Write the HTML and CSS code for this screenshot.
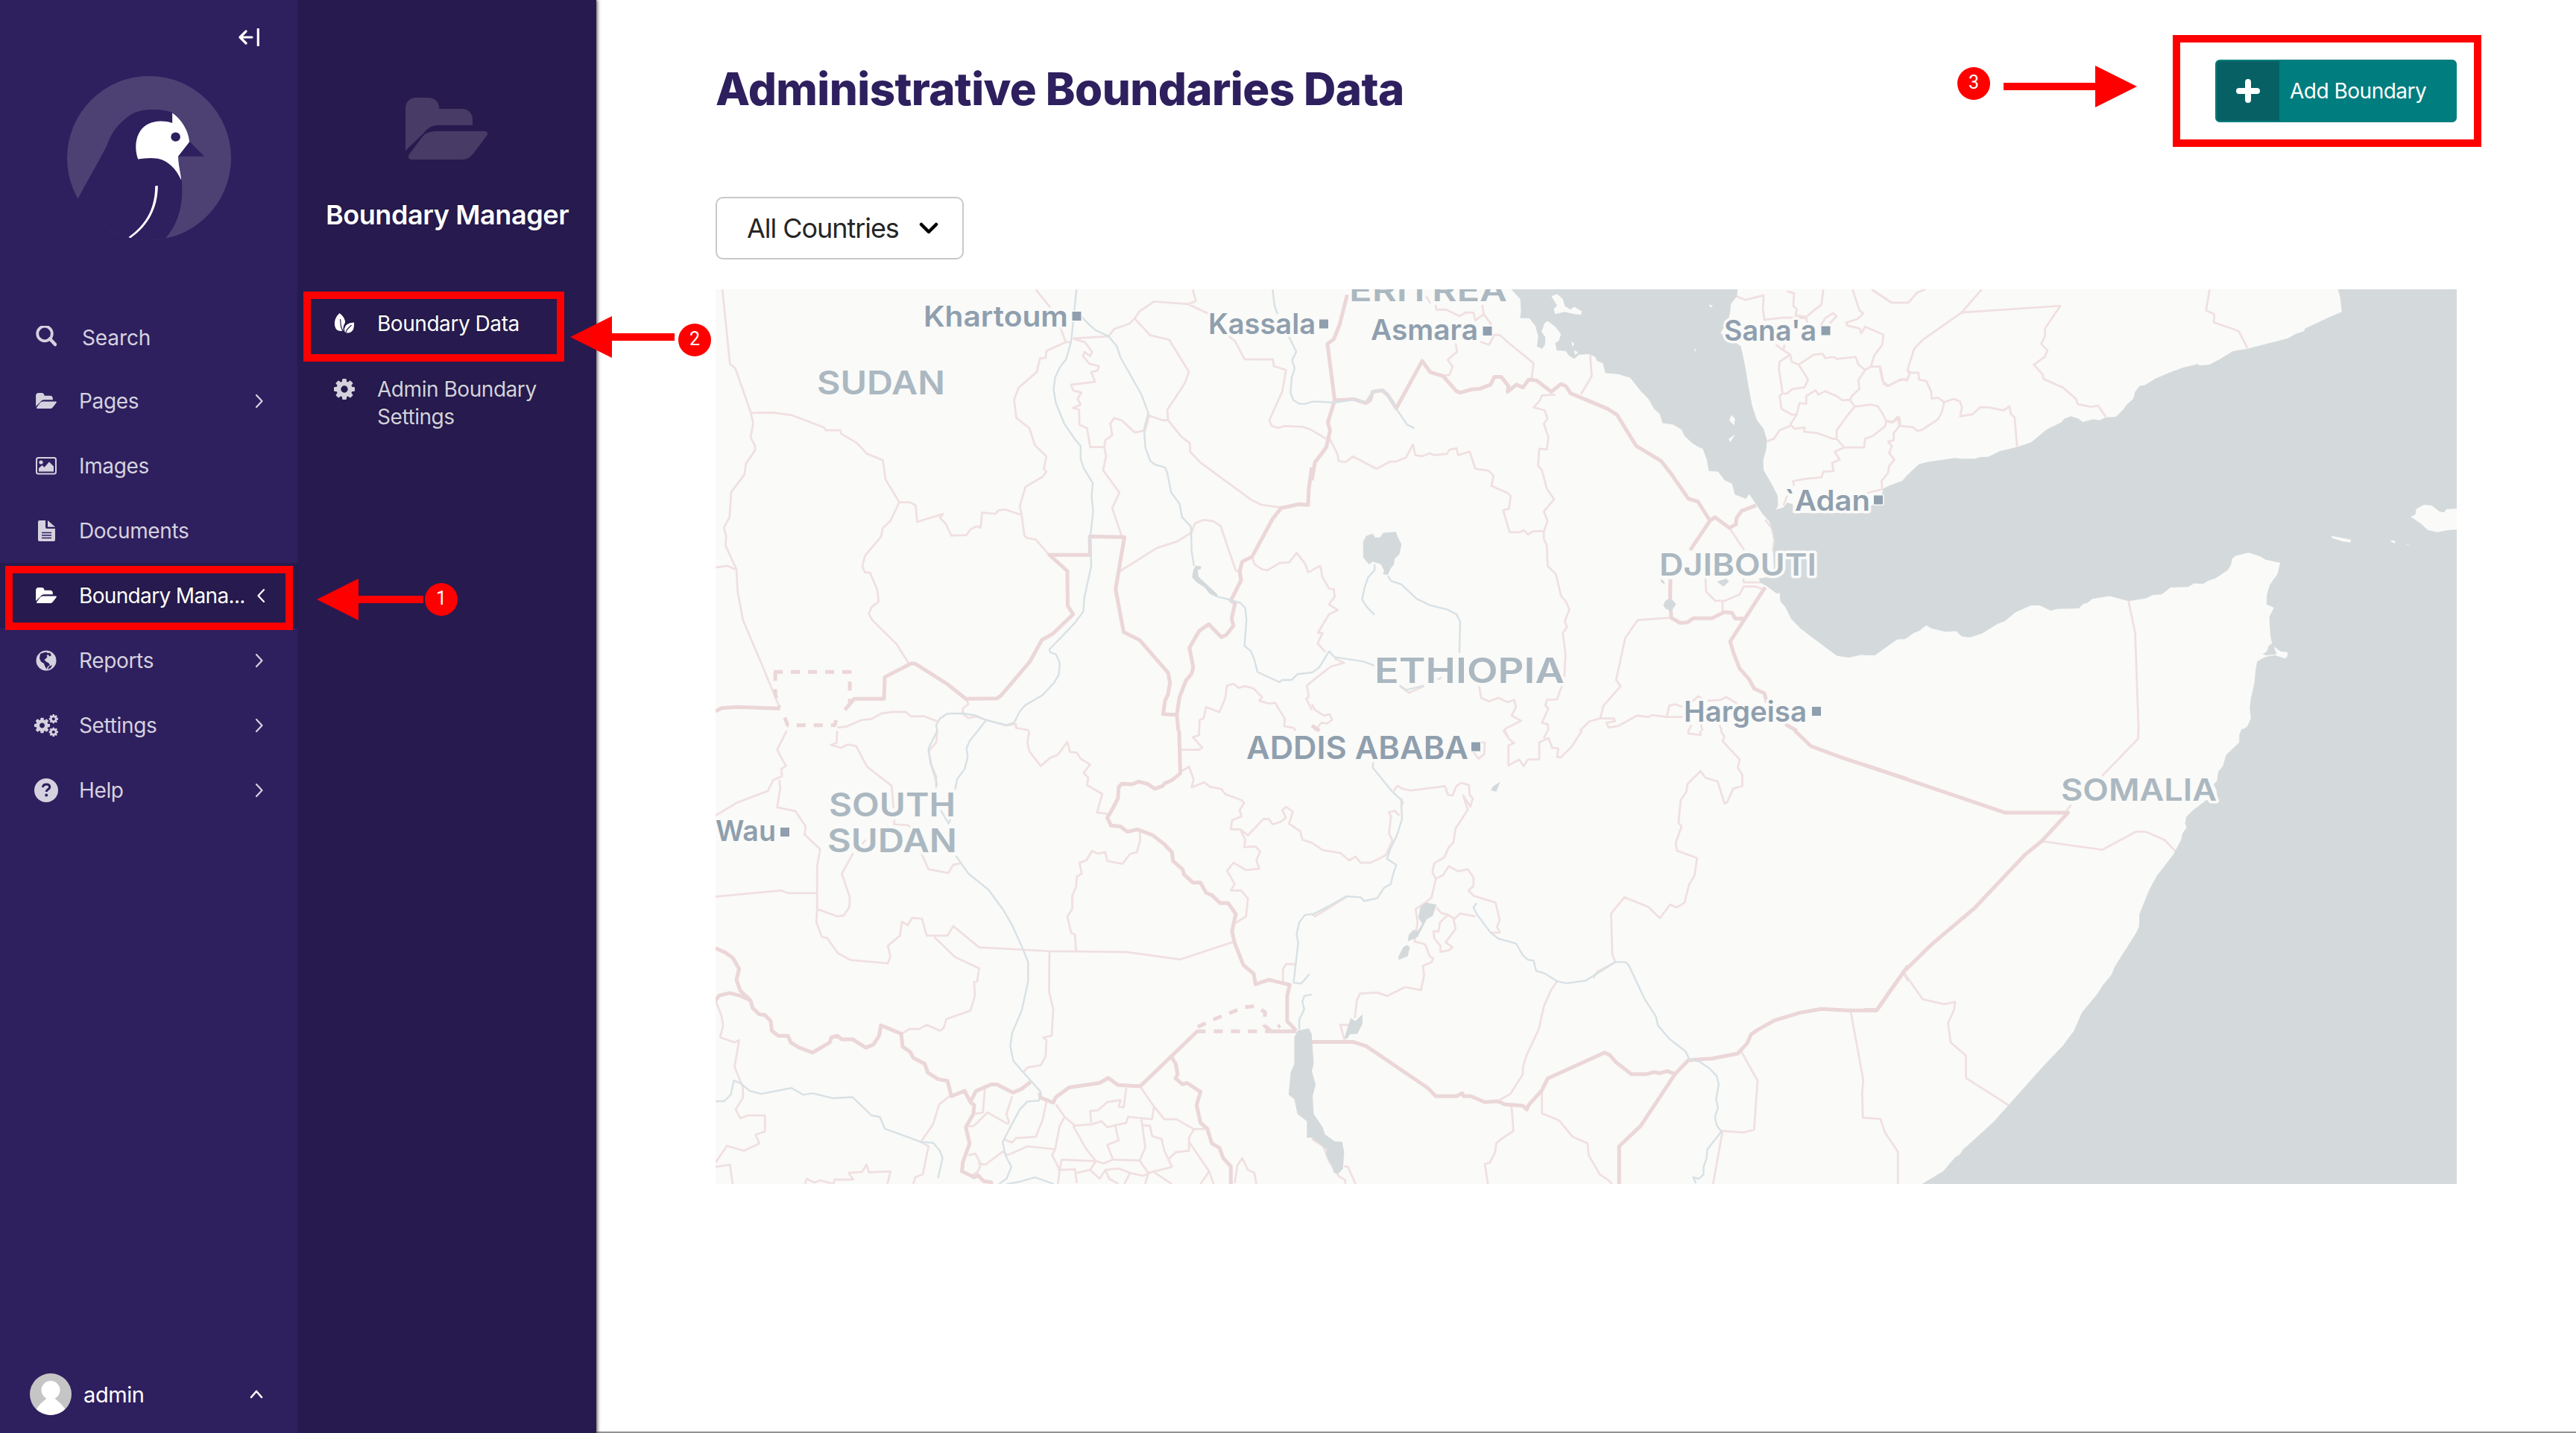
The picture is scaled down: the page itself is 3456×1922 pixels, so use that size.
FILE: index.html
```html
<!DOCTYPE html>
<html lang="en">
<head>
<meta charset="utf-8">
<title>Administrative Boundaries Data</title>
<link rel="stylesheet" href="styles.css">
</head>
<body>
<svg class="defs" aria-hidden="true">
  <symbol id="folder" viewBox="0 0 110 83"><path d="M0 71V14C0 6 6 0 14 0h17c8 0 14 6 14 13v2h31c8 0 14 6 14 14v8H43c-7 0-14 4-18 10zM41 45h65c4 0 5 3 3 6L91 75c-4 5-9 8-15 8H8c-4 0-5-4-3-7l18-24c4-5 11-7 18-7z"/></symbol>
  <symbol id="gear" viewBox="0 128 1536 1536"><path d="M1024 896q0-106-75-181t-181-75-181 75-75 181 75 181 181 75 181-75 75-181zm512-109v222q0 12-8 23t-20 13l-185 28q-19 54-39 91 35 50 107 138 10 12 10 25t-9 23q-27 37-99 108t-94 71q-12 0-26-9l-138-108q-44 23-91 38-16 136-29 186-7 28-36 28h-222q-14 0-24.500-8.500t-11.500-21.500l-28-184q-49-16-90-37l-141 107q-10 9-25 9-14 0-25-11-126-114-165-168-7-10-7-23 0-12 8-23 15-21 51-66.500t54-70.500q-27-50-41-99l-183-27q-13-2-21-12.500t-8-23.500v-222q0-12 8-23t19-13l186-28q14-46 39-92-40-57-107-138-10-12-10-24 0-10 9-23 26-36 98.500-107.500t94.500-71.500q13 0 26 10l138 107q44-23 91-38 16-136 29-186 7-28 36-28h222q14 0 24.500 8.500t11.500 21.500l28 184q49 16 90 37l142-107q9-9 24-9 13 0 25 10 129 119 165 170 7 8 7 22 0 12-8 23-15 21-51 66.500t-54 70.500q26 50 41 98l183 28q13 2 21 12.500t8 23.500z"/></symbol>
  <symbol id="chevron" viewBox="0 0 12 20"><path d="M2 2l7.500 8L2 18" fill="none" stroke="currentColor" stroke-width="2.200" stroke-linecap="round" stroke-linejoin="round"/></symbol>
</svg>
<div class="layout">
  <aside class="sidebar">
    <div class="sidebar-top">
      <svg class="collapse" viewBox="0 0 28 24"><path d="M18 12H2M10 4L2 12l8 8" fill="none" stroke="#fff" stroke-width="3.200" stroke-linecap="round" stroke-linejoin="round"/><path d="M26.300 1v22" stroke="#fff" stroke-width="3.200" stroke-linecap="round"/></svg>
    </div>
    <svg class="logo" viewBox="90 102 220 220">
      <defs><clipPath id="disc"><circle cx="200" cy="212" r="110"/></clipPath></defs>
      <circle cx="200" cy="212" r="110" fill="#4d4174"/>
      <g clip-path="url(#disc)"><g transform="scale(.523 .4082)">
        <path fill="#2e1f5e" d="M198 658C225 590 250 540 275 475C285 440 298 415 320 392C345 362 370 359 400 360C425 361 440 368 445 372C465 390 482 425 486 465L524 514H457L466 590C470 650 466 720 425 783L420 810H200Z"/>
        <path fill="#fff" d="M442 371C465 390 484 430 486 466L457 514C458 545 464 570 465 592C450 550 430 528 405 521C385 517 370 520 354 523C345 490 347 455 360 430C375 402 405 390 442 404Z"/>
        <ellipse cx="450.500" cy="450" rx="12" ry="15" fill="#2e1f5e"/>
        <path fill="#fff" d="M398 611L405 610C405 670 388 735 335 782L329 780C378 735 398 680 398 611Z"/>
      </g></g>
    </svg>
    <nav class="menu">
      <a class="item search"><svg class="icon" viewBox="0 0 28 28"><circle cx="12" cy="10.500" r="9.800" fill="none" stroke="currentColor" stroke-width="3.800"/><path d="M19 17.500l7 7.500" stroke="currentColor" stroke-width="4.600" stroke-linecap="round"/></svg><span>Search</span></a>
      <a class="item"><svg class="icon folder"><use href="#folder"/></svg><span>Pages</span><svg class="chev"><use href="#chevron"/></svg></a>
      <a class="item"><svg class="icon" viewBox="0 0 28 24"><rect x="1" y="1" width="26" height="21.500" rx="2.500" fill="none" stroke="currentColor" stroke-width="2"/><circle cx="7" cy="7" r="2.600" fill="currentColor"/><path fill="currentColor" d="M4 19.500v-4.500l4.500-4 3 2.800L18 6.500l6 6v7z"/></svg><span>Images</span></a>
      <a class="item"><svg class="icon" viewBox="0 0 28 28"><path fill="currentColor" d="M5 0H13V9q0 2 2 2H26V26q0 2-2 2H5q-2 0-2-2V2q0-2 2-2zM16 0L26 8.800H16z"/><path d="M8 16.500h13M8 20h13M8 23.500h13" stroke="#2e1f5e" stroke-width="1.700"/></svg><span>Documents</span></a>
      <a class="item active"><svg class="icon folder"><use href="#folder"/></svg><span>Boundary Mana...</span><svg class="chev back"><use href="#chevron"/></svg></a>
      <a class="item"><svg class="icon" viewBox="0 0 28 28"><circle cx="14" cy="14" r="13.500" fill="currentColor"/><path fill="#2e1f5e" d="M6 5Q10 3 14 2.500L16 4 19 3.500 21 7 18 8.500 17 6 14.500 7 15.500 9.500 11.500 13 14 15.500 17.500 17.500 19 20 16 22 14.500 25.500 12 21 11 18 7 15.500 5 11zM18 21.500L22 20 20 24 16 26z"/></svg><span>Reports</span><svg class="chev"><use href="#chevron"/></svg></a>
      <a class="item"><svg class="icon gears" viewBox="0 0 32 30"><use href="#gear" x="0" y="4.500" width="21" height="21"/><use href="#gear" x="19.500" y="0" width="12.500" height="12.500"/><use href="#gear" x="19.500" y="17.500" width="12.500" height="12.500"/></svg><span>Settings</span><svg class="chev"><use href="#chevron"/></svg></a>
      <a class="item"><svg class="icon help" viewBox="0 0 32 32"><circle cx="16" cy="16" r="16" fill="currentColor"/><path d="M11.500 12q.3-4 4.700-4t4.500 3.600q0 2-2.400 3.200-2 1.200-2.100 3.200" fill="none" stroke="#2e1f5e" stroke-width="3"/><circle cx="16.200" cy="22.500" r="2" fill="#2e1f5e"/></svg><span>Help</span><svg class="chev"><use href="#chevron"/></svg></a>
    </nav>
    <div class="account">
      <svg class="avatar" viewBox="0 0 56 56"><clipPath id="av"><circle cx="28" cy="28" r="28"/></clipPath><g clip-path="url(#av)"><rect width="56" height="56" fill="#c5c5c5"/><ellipse cx="28" cy="22.500" rx="12.500" ry="12.500" fill="#fff"/><path fill="#fff" d="M23 32h10q1 3 5 5.500Q45 43 48 50V56H8V50Q11 43 18 37.500 22 35 23 32z"/></g></svg>
      <span class="account-name">admin</span>
      <svg class="chev-up" viewBox="0 0 18 12"><path d="M2 10l7-8 7 8" fill="none" stroke="#fff" stroke-width="2.600" stroke-linecap="round" stroke-linejoin="round"/></svg>
    </div>
  </aside>
  <aside class="submenu">
    <svg class="submenu-icon"><use href="#folder"/></svg>
    <h2>Boundary Manager</h2>
    <a class="subitem active"><svg class="subicon" viewBox="0 0 27 27"><path fill="currentColor" d="M7 0Q15 6 14.500 13Q11.500 17 12 23.500Q2 26 .5 16Q-.5 7 7 0zM26.500 12.500Q27.500 26 18 26.500Q13 27 13.500 21Q14.500 13 26.500 12.500z"/><path d="M8 8l1 10 3 8M23 16l-6 6-2 5" fill="none" stroke="#261a4e" stroke-width="1.200"/></svg><span>Boundary Data</span></a>
    <a class="subitem"><svg class="subicon gear"><use href="#gear"/></svg><span>Admin Boundary<br>Settings</span></a>
  </aside>
  <main class="main">
    <header class="header">
      <h1>Administrative Boundaries Data</h1>
      <button class="add"><span class="add-icon"><svg viewBox="0 0 32 32"><path d="M16 4v24M4 16h24" stroke="#fff" stroke-width="8" stroke-linecap="round"/></svg></span><span class="add-label">Add Boundary</span></button>
    </header>
    <div class="select"><span>All Countries</span><svg viewBox="0 0 26 16"><path d="M3 3l10 10L23 3" fill="none" stroke="#000" stroke-width="4.500" stroke-linecap="round" stroke-linejoin="round"/></svg></div>
    <svg class="map" viewBox="960 388 2336 1200">
      <rect x="960" y="388" width="2336" height="1200" fill="#fafaf8"/>
      <!-- north-west tile -->
      <g transform="translate(960 380) scale(.5102 .3827)">
        <path class="water" d="M1262 990L1278 992 1275 1003 1268 1005 1270 1028 1320 1090 1318 1100 1300 1088 1285 1065 1265 1048 1253 1030 1256 1005z"/>
        <path class="thin" d="M18 22L38 283 52 298 92 450 99 490 92 540 104 570 104 585 80 632 76 670 41 732 37 818 22 857 28 888 26 918 55 1003 58 1080 72 1180 115 1315 168 1485M0 996L32 990 52 1003M92 454L152 453 200 462 285 505 290 515 328 515 330 527 372 560 398 597 440 620 447 687 483 767 510 767 526 778 530 836 598 808 590 822 605 842 620 884 660 882 670 863 685 852 697 856 701 803 735 808 745 795 762 793 805 812 812 885 820 893 842 898 876 950M483 767L460 832 440 857 435 888 393 955 386 992 393 1013 406 1014 425 1072 429 1115 410 1135 403 1158 412 1180 475 1263 508 1332M842 22L880 84M905 150L921 206 870 237 868 262 853 263 845 310 797 366 785 408 791 472 825 507 840 568 870 606 863 650 870 660 860 678 815 713 800 780 805 812M921 206H935M940 193L1033 186 1048 160 1088 142 1102 123 1115 98 1153 64 1243 73 1263 62 1255 22M1243 73L1295 106M940 193L972 207 990 240 985 255 970 240 966 255 983 282 1008 290 1005 305 988 312 998 345 958 352 935 355 940 375 962 383 952 405 960 425 940 437 956 443 957 495 977 508 985 574 1022 574 1027 605 1019 655 1062 733 1043 788 1068 885"/>
        <path class="thin" d="M1102 123L1143 182 1193 198 1245 311 1233 352 1188 443 1190 480 1225 538 1247 560 1248 590 1275 628 1408 758 1435 776 1488 786M1022 574L1025 550 1043 532 1038 492 1048 472 1068 480 1103 523 1130 515 1140 463 1175 480 1190 480M1350 185L1366 203 1391 266 1466 267 1468 290 1500 304 1490 380 1456 480 1463 500 1480 507 1497 500 1545 503 1568 514M1062 1010L1160 928 1213 905 1252 873 1260 842 1283 829 1308 833 1328 850 1368 1007 1378 1010M1411 958L1417 985 1438 1003 1452 1005 1483 980 1508 978 1528 945 1550 982 1558 1012 1568 1008M320 1557L345 1553 385 1530 410 1527 435 1508 465 1502 500 1502 515 1518 548 1517 583 1535M658 1455L665 1475 650 1490 650 1508 665 1524 685 1518 710 1530 765 1550 790 1545 790 1558 823 1566M1272 1568L1273 1530 1283 1525 1290 1485 1325 1503 1340 1455 1345 1410 1362 1403 1375 1418 1393 1412 1415 1420 1437 1450 1430 1463 1455 1473 1472 1470 1480 1490 1497 1525 1495 1552 1520 1558 1525 1568M1568 1395L1555 1410 1560 1450 1553 1455 1568 1495"/>
        <path class="thick" d="M0 1500L15 1489 55 1485 170 1490M340 1495L365 1456 443 1456 445 1380 515 1332 525 1333 610 1405 658 1456 740 1455 752 1443 827 1325 858 1250 887 1228 940 1160 926 1130 925 1008 878 952 985 952 984 887 1075 890 1052 1072 1073 1222 1115 1250 1190 1365 1195 1400 1190 1440 1182 1463 1177 1510 1213 1512 1217 1568M1213 1512L1220 1450 1237 1392 1252 1368 1256 1345 1246 1277 1272 1218 1297 1195 1330 1240 1343 1232 1362 1200 1357 1175 1366 1122 1355 1112 1382 1040 1378 1010 1385 975 1411 958 1465 825 1488 787 1535 774 1558 777 1560 720 1568 645"/>
        <path class="thick dash" d="M153 1362H353V1470M157 1362V1440L168 1485M182 1522L190 1549H313L322 1510"/>
        <path class="river" d="M949 22L935 205 922 265 905 295 893 330 889 372 895 420 917 492 947 550 960 570 960 615 968 648 992 700 989 745 993 800 985 890 988 990 970 1100 967 1150 945 1190 878 1283 880 1293 895 1300 905 1330 903 1370 890 1400 860 1443 815 1478 800 1500 785 1540 765 1548 740 1540 710 1530 685 1515 650 1507 610 1508 590 1525 580 1550 583 1568M961 115L985 148 1000 165 1033 185 1055 220 1065 260 1120 390 1138 455 1127 510 1130 575 1143 622 1155 635 1182 645 1188 665 1198 733 1220 772 1227 820 1250 852 1252 940 1258 990M1318 1098L1350 1108 1380 1120 1393 1138 1396 1180 1391 1270 1408 1290 1417 1320 1425 1362 1483 1398 1490 1390 1515 1390 1530 1370 1568 1364M1465 22L1470 80 1478 108M1508 187L1527 240 1516 270 1523 298 1515 330 1512 385 1520 410 1535 422 1550 423 1568 415M710 1533L690 1568"/>
      </g>
      <!-- north-centre tile -->
      <g transform="translate(1760 380) scale(.5102 .3827)">
        <path class="thin" d="M325 75L328 93 353 92 388 115 405 102 425 103 430 130 452 108 470 140 472 180M300 45L312 70M448 75L452 108M378 210L382 240 357 268 370 292 362 320 347 325M443 205L466 215 480 180 495 182 523 215 583 280 578 335M732 250L736 325 708 388M640 390L605 393 600 410 583 435 612 445 620 475 610 492 622 540 618 582 598 580 595 640 605 655 618 720 637 757 610 800 620 832 610 870 610 895 618 920 620 990 642 1020 655 1095 668 1115 677 1143 665 1185 671 1205 660 1225 667 1300 664 1380M45 540L68 600 70 622 88 627 108 607 170 650 205 625 220 625 248 610 266 565 272 602 290 606 310 595 320 602 355 598 362 583 380 578 385 602 415 590 430 650 465 657 478 675 472 710 515 735 523 745 518 790 503 795 520 872 545 873 558 865 568 880 580 870 610 868M0 1005L22 990 28 1030 45 1070 58 1072 60 1098 45 1125 68 1145 45 1160 16 1225 28 1225 15 1262 35 1292M0 515L38 545M60 1315L85 1330 50 1343 0 1395M230 1410L255 1435 295 1412M440 1412L445 1453 465 1465 490 1453 515 1468 532 1460 537 1485 525 1515 550 1533 510 1560 505 1568M658 1412L652 1430 645 1458 618 1460 614 1480 622 1490 605 1540 620 1545 622 1568M0 1475L8 1495 32 1515 47 1510 53 1530 40 1543 25 1540 8 1568"/>
        <path class="thin" d="M1115 45L1140 58 1188 42 1186 88 1190 128 1240 120 1300 122 1303 140M1250 28L1268 35 1266 80 1275 90 1272 112 1300 118 1320 95 1340 75 1345 22M1422 22L1440 95 1450 105 1435 125 1405 138 1408 148 1440 158 1445 175 1455 152 1503 180 1500 215 1478 255 1470 292M1472 22L1525 68 1568 68M1338 148L1350 122 1370 105 1380 115 1362 140M1220 215L1240 235 1243 215M1240 235L1258 250 1230 275 1228 300 1238 385 1230 395 1235 440 1262 460 1275 460M1258 250L1262 275 1280 285 1305 338 1295 365 1265 370 1250 385 1240 388M1280 285L1320 250 1343 247 1350 262 1372 258 1380 265 1430 258 1437 285 1455 303 1470 292 1493 292 1500 340 1515 360 1545 340 1568 335M1455 303L1437 340 1440 370 1420 395 1415 410 1428 432 1410 460 1402 475 1380 515 1380 545 1400 575 1452 575 1455 545 1475 535 1508 500 1510 482 1500 455 1488 430 1470 425 1428 432M1275 460L1282 420 1300 422 1300 395 1325 375 1332 390 1350 378 1380 395 1395 410 1415 408M1275 460L1258 495 1270 510 1295 505 1295 520 1330 525 1370 545 1380 545M1198 553L1215 545 1230 515 1258 500M1400 575L1375 590 1388 618 1368 630 1372 658 1345 660 1340 680 1300 685 1265 693 1268 710M1510 482L1528 485 1540 468 1545 500 1530 525 1530 550 1515 555 1525 570 1518 595 1532 618 1518 640 1515 665 1498 692 1500 722 1460 735M1240 778L1250 745M1098 858L1137 935M1192 828L1210 860 1216 900 1212 940M1035 1035L1037 1080 1060 1112 1085 1113 1125 1090 1135 1063 1165 1062 1190 1073M1080 1113V1150M1135 1035V1048H1180M945 1172L857 1180 824 1243 800 1390 812 1412 767 1480 758 1525 730 1535 705 1568M758 1525L795 1525 797 1535 775 1540 780 1557 805 1552 855 1515 885 1520 895 1513 933 1520 940 1480 955 1475 975 1485M933 1520H975M1000 1465L1017 1447 1030 1460M1040 1463L1075 1460 1090 1450 1118 1473M998 1548L990 1568M1023 1545L1027 1568M1072 1548L1078 1568"/>
        <path class="thick" d="M93 40L73 145 58 195 41 212 60 410 42 488 48 515 38 575 8 628 0 690M60 410L110 406 142 420 153 410 160 380 185 375 200 392 222 438 290 272 312 312 345 325 380 378 390 383 420 372 440 370 470 355 480 328 498 328 517 360 515 380 538 355 555 365 570 338 590 340 630 380 655 353 668 360 680 385 778 440 802 460 853 570 918 622 945 668 990 755 1015 765 1047 832 995 935M1047 832L1060 820 1098 857 1115 845 1117 822 1130 798 1168 778M943 1037L942 1095 945 1172 968 1190 988 1188 1003 1174 1052 1174 1085 1152 1105 1155 1113 1175 1140 1175M1192 1065L1100 1255 1110 1300 1125 1350 1150 1388 1163 1420 1190 1437 1197 1470M1245 1545L1275 1568M0 1550L20 1568"/>
        <path class="water" d="M520 15L548 55 550 95 548 122 572 122 588 150 595 185 592 222 606 229 613 215 614 188 604 170 612 140 620 132 640 152 655 178 650 200 640 210 644 235 668 238 675 252 690 265 702 250 730 248 745 258 750 272 765 280 772 315 805 318 838 332 865 378 885 405 900 440 915 458 922 490 950 495 972 512 980 535 1000 560 1015 572 1028 580 1038 615 1044 658 1068 660 1085 690 1105 702 1112 740 1142 755 1150 738 1168 775 1185 808 1203 835 1212 870 1217 905 1213 940 1215 1000 1195 1030 1175 1035 1180 1050 1195 1060 1222 1087 1230 1085 1232 1115 1245 1135 1260 1175 1285 1210 1310 1235 1380 1305 1412 1312 1445 1302 1480 1303 1510 1275 1540 1248 1568 1240V668L1553 692 1520 708 1502 720 1500 740 1498 775 1475 805H1265V775L1250 768 1240 785 1220 793 1226 780 1225 745 1210 705 1188 655 1187 620 1195 580 1197 550 1188 510 1170 478 1158 430 1148 360 1143 320 1138 280 1128 220 1100 195 1075 175 1085 150 1095 128 1100 100 1102 72 1118 45 1120 15z"/>
        <path class="water" d="M135 960L135 905 143 885 160 877 167 892 180 890 187 875 221 871 226 890 236 915 230 950 218 965 216 985 207 1000 200 1022 187 1020 190 1008 182 985 160 975 150 985zM940 1105L950 1112 958 1125 945 1150 930 1140 924 1128 930 1112zM916 1037L925 1042 929 1055 920 1050zM1065 1045L1090 1035 1097 1045 1082 1063zM325 1390L342 1378 338 1388z"/>
        <path class="land" d="M630 45L645 38 660 55 665 80 680 92 690 82 710 98 708 110 690 108 665 100 640 108 636 90 645 78zM1044 73L1055 80 1048 85zM1103 462L1113 475 1110 498 1098 480zM1113 530L1100 557 1096 545zM683 203L690 212 685 224zM690 234L700 242 692 252zM1006 227L1011 235 1007 239z"/>
        <path class="river" d="M0 415L20 415 60 418 110 408 142 415 160 380 185 375 205 400 225 445 250 495 270 508M165 985V1005L148 1030 138 1070 132 1108 145 1135 165 1162M200 1025L208 1043 235 1055 275 1105 310 1128 355 1143 380 1160 390 1185 388 1295M0 1365L20 1345 45 1290 60 1310 135 1325 165 1340M232 1410L248 1425 295 1410"/>
      </g>
      <!-- north-east tile -->
      <g transform="translate(2500 380) scale(.5230 .3827)">
        <path class="thin" d="M22 22L73 68H115L138 32 160 20M303 22L252 102 505 79 466 158V185L456 212 472 235 465 258 437 285 460 320 462 335 512 365 545 405 550 424 585 433 602 429 622 468M252 102L152 198 130 230 113 304 120 313 141 313 143 338 161 342 174 380 175 404 192 401 207 417 232 405 248 415 253 435 248 466 280 459 300 434 322 435 360 445 375 431 378 458 388 470 394 573M113 304L118 320 112 340 98 335 62 360 52 352 43 292 20 292M207 417Q203 455 190 478L150 514 138 517 127 504 95 500 92 470 75 488 58 484M888 22L879 95 900 108 899 137 948 160 963 168 985 227M680 1114L697 1225 706 1568"/>
        <path class="water" d="M1216 15L1223 50 1227 100 1195 118 1165 138 1133 158 1130 168 1108 178 1090 192 1060 203 985 229 948 238 915 265 888 285 862 288 858 283 820 295 785 313 750 333 722 357 708 360 697 380 692 405 675 425 668 440 648 468 622 470 605 480 590 476 562 486 552 474 532 466 515 475 508 487 470 512 430 557 393 574 350 588 320 608 300 609 285 615 250 615 235 612 165 626 142 634 120 662 103 693 65 710 50 722 48 745 25 775 0 800V1303H30L85 1248 107 1247 130 1225 143 1218 161 1199 175 1210 210 1221 238 1219 252 1237 272 1241 305 1227 345 1193 362 1185 390 1153 430 1129 452 1129 480 1147 497 1141 553 1139 563 1124 575 1120 587 1106 632 1096 680 1114 725 1104 742 1092 765 1090 788 1066 833 1064 848 1052 872 1053 885 1042 903 1034 935 1005 943 985 946 965 955 955 988 944 1018 957 1032 969 1069 979 1062 1020 1043 1055 1035 1090 1034 1125 1053 1137 1041 1170 1044 1235 1048 1262 1040 1270 1035 1290 1024 1300 1035 1304 1060 1300 1053 1273 1070 1290 1088 1293 1088 1305 1082 1315 1055 1303 1030 1310 1010 1325 1006 1355 1003 1400 994 1455 991 1490 994 1525 985 1552 968 1570H1530V15z"/>
        <path class="land" d="M1530 789L1495 792 1490 803 1478 800 1458 779 1438 776 1418 791 1416 810 1404 818 1430 842 1448 865 1472 872 1500 865 1530 862zM1200 885L1225 892 1250 898V908L1230 905 1203 893zM1351 904L1358 900 1365 905 1363 911zM1393 913L1400 914 1397 917z"/>
      </g>
      <!-- south-west tile -->
      <g transform="translate(960 980) scale(.5102 .3954)">
        <path class="thin" d="M187 0L162 65 185 120 173 130 175 155 152 167 137 205 55 245 0 288M168 167L170 195 162 260 210 273 237 325 234 352 275 402 267 460V605L320 630 337 627 352 598 353 565 332 485 362 415M0 563L172 542 190 551H267M267 605L265 650 280 700 293 703 322 755 355 778 453 789 460 765 453 730 485 695 490 648 505 660 517 635 543 638 555 695H610L625 663 693 735 878 748 1080 751 1222 776 1363 716M575 700L630 768 693 806 688 850 680 853 682 900 670 950 607 978 600 1008 590 1018 555 998 535 1012 510 1012 490 1028M320 0L318 42 303 48 330 58 348 47 370 52 398 122 463 187 468 262M470 303V318L505 320 515 330M395 370L385 385M538 407L560 470 612 483 625 455 645 450M583 0L580 40 560 70 570 130 583 185M825 0L820 40 825 70 855 120 880 92 900 82 925 38 932 72 950 75 960 95 985 115 968 143 980 160 977 185 1017 215 1003 278 1030 282M1115 340L1117 370 1108 412 1090 418 1070 452 1030 442 1025 412 1005 417 990 408 975 440 957 448 963 485 950 495 948 530 938 560V605L925 630 935 685 945 692 948 748M878 750L877 885 888 945 884 1035 862 1040 870 1050 868 1105 855 1135 820 1142 810 1158M1270 0L1272 15 1255 22 1280 58 1270 65H1222M1222 140L1245 122 1257 165 1252 192 1285 175 1300 190 1330 198 1340 215 1382 235 1390 245 1378 270 1383 290 1358 305 1355 335 1380 335 1400 355 1440 300 1455 300 1465 318 1485 310 1500 295 1490 270 1500 258 1518 275 1508 315 1538 342 1543 370 1568 380M1380 335L1393 370 1390 395 1420 393 1432 410 1422 440 1430 468 1395 473 1362 448 1345 475 1365 520 1355 542H1382L1400 570 1395 630 1368 652M1525 792H1500L1492 810V852"/>
        <path class="thin" d="M0 915L15 965 20 1000 12 1040 50 1057 62 1050 50 1140 72 1210V1245L53 1285 65 1315 85 1305H130V1360L105 1370 115 1400 75 1425 30 1408 0 1465M0 1480L38 1472 45 1538M235 1538L240 1520 260 1533 275 1525 310 1538 313 1523H362L350 1500 385 1497 397 1472 403 1498 460 1495 452 1538M615 1240L588 1268 572 1335 540 1395 560 1410 545 1505 525 1515 520 1538M683 1300L703 1295 708 1217M665 1343L680 1340 715 1295 760 1328 772 1335M780 1240L765 1300 772 1330M870 1260L860 1320 842 1378 790 1382 780 1397 757 1385M895 1268L918 1310 945 1340 990 1335 1015 1325 1030 1345 1080 1330 1085 1310 1148 1318 1153 1275 1118 1210M1153 1275L1180 1318H1212L1258 1352 1290 1350M1080 1212L1073 1278 1060 1275 1065 1253 1030 1260 1005 1288 985 1290 988 1330M918 1310L905 1340 893 1420 820 1410 768 1440 755 1428 710 1472 690 1467M940 1340L975 1420 1000 1460 910 1455 905 1490 885 1440 893 1420M1000 1460L1020 1468 1045 1455 1115 1458 1130 1415 1120 1318M1045 1455L1030 1405 1060 1390 1050 1335M1115 1458L1138 1500 1200 1480 1180 1425 1173 1385 1148 1375 1142 1340 1120 1338M1190 1455L1210 1430 1245 1425V1380L1258 1352M1245 1395L1298 1495 1275 1538M1298 1495L1310 1538M900 1490L945 1488 950 1535M905 1490L900 1538M1000 1460L985 1490 1010 1520 1025 1490 1060 1485 1090 1500 1125 1510 1150 1495 1200 1538M1138 1500L1130 1538M1025 1490L1035 1520 1060 1538M1090 1500L1075 1538M950 1500L985 1490M1365 1535L1372 1475 1385 1450 1400 1490 1417 1500 1422 1538M665 1440L683 1435 698 1470 690 1495 675 1508"/>
        <path class="thick" d="M1219 0L1222 145 1200 168 1182 178 1175 188 1155 197 1135 180 1112 173 1095 182 1068 180 1060 192 1058 230 1042 270 1030 295 1040 322 1065 325 1083 343 1110 335 1150 355 1180 385 1200 412 1203 442 1228 470 1232 488 1255 515H1275L1290 550 1305 558 1327 585H1348L1368 622 1358 680 1365 720 1388 795 1415 825 1420 860 1455 845 1510 862 1503 900V985L1527 1018M0 738L25 752 45 770 62 808 55 845 65 882 92 915M0 915L10 898 38 890 62 898 92 915 97 940 115 962 130 965 145 985 148 1018 165 1035 190 1035 198 1058 220 1075 255 1092 300 1058 305 1040 320 1035 332 1047H360L395 1075 415 1065 430 1035 435 1000 455 1010 488 1028 492 1072 512 1090 520 1110 550 1130 558 1160 585 1182 610 1188 620 1240 655 1222 670 1260 680 1270 678 1300 658 1345 668 1400 650 1465 648 1495 680 1515 690 1508 705 1528 725 1532V1545M670 1260L685 1222 725 1200 740 1200 782 1228 805 1215 828 1192M852 1228L855 1245 888 1262 895 1243 930 1210 1010 1195 1033 1178 1058 1202 1117 1206 1268 1018M1445 1020H1527M1197 1103L1210 1130 1215 1165 1210 1180 1228 1200 1240 1195 1275 1225 1265 1270 1275 1330 1293 1350 1305 1400 1325 1415 1335 1450 1355 1478V1538"/>
        <path class="thick dash" d="M1265 1020H1445M1268 1005L1305 982 1390 938 1420 935 1445 955 1443 1000 1460 1018 1485 1000"/>
        <path class="water" d="M1530 1018L1560 1010 1568 1030V1380H1555V1325L1530 1300 1522 1250 1507 1235 1512 1160 1522 1130V1040z"/>
        <path class="river" d="M583 0L560 60 565 110 580 155V195M690 0L668 35 660 60 663 90 655 130 635 165 630 200M592 270L613 315 618 300M632 425L665 485 718 540 755 605 780 660 808 740 822 785V850L805 950 780 1025 775 1070 783 1120 810 1160 855 1225 850 1255 820 1258 800 1285 775 1345 755 1395 762 1440 778 1480 765 1520 745 1538M0 1257H22L40 1235 48 1187 65 1195 90 1222 120 1232 200 1212 230 1235 255 1230 310 1247 360 1243 410 1305 432 1310 445 1350 540 1395 572 1398 590 1425 597 1450 585 1518M765 1538L800 1530 840 1515 890 1538M1568 622L1550 625 1535 650 1528 690 1532 720 1520 855 1540 858 1562 825M1568 895L1548 900 1543 920 1548 945 1535 980V1015"/>
      </g>
      <!-- south-centre tile -->
      <g transform="translate(1760 980) scale(.5102 .3954)">
        <path class="thin" d="M503 0L520 30 532 42 517 50V118L545 98 557 120 568 98 598 97V40L622 25 632 58 648 60 645 90H655L683 55 710 0M508 0L515 20M620 0L610 25M418 55L425 38 455 40 453 80 438 95 418 60M990 0V10L1022 15V0M1075 0L1085 20 1080 35 1125 98 1120 125 1132 150V187L1108 197 1092 243 1085 247 1067 172 1035 160 1022 137 988 180 985 207 970 235 964 312 972 325 957 380 960 407 1013 432 1006 492 992 522 980 583 960 600 942 590 915 636 885 598 822 565 787 620 790 760 798 785M215 205L225 187 240 198 260 203 350 188 358 218 370 220 380 188 393 177 413 185 415 218 423 230 417 258 398 220 410 268 378 332 372 380 360 395 348 430 322 450 317 480 326 502 345 490 360 460 385 477 410 470 425 498V527L412 542 425 560 462 575 483 583 494 642 487 665 494 685 470 685M326 502L315 565 300 582 273 605 278 650 270 715 298 725 310 765 319 772 315 785 292 798 295 830 287 880 245 870 198 900 172 888 127 892 118 915 113 975M113 998H75L86 1050M328 600L340 618 358 625 375 638 390 620 430 630M358 625L337 650 333 682 320 680 322 705 338 730V750L360 745 370 735 352 718 378 672 372 635M0 380L28 405 75 415 98 440 115 427 128 448H155L195 422 212 372 203 350 208 290 202 277 218 272 230 288M0 620L8 630 90 565M235 230L240 250M645 850L630 878 610 935 597 1012 565 1100 555 1140V1165L522 1232 495 1252M740 840L750 818 798 785M525 1272L530 1358 498 1385 485 1400 482 1430 468 1465 455 1470 463 1538M605 1220V1298L650 1322 685 1377 725 1400 728 1440 757 1505 780 1525 790 1538M1130 1090L1172 1187 1163 1353 1135 1363 1080 1358 1055 1538M1417 952L1450 1185 1447 1230 1449 1313 1495 1317 1507 1363 1541 1428V1538M1555 820L1568 850M0 1385L30 1410 45 1460 70 1510 88 1525V1538M85 1478L95 1480 115 1538"/>
        <path class="thick" d="M1270 0L1312 52 1395 92 1568 165M0 1056H110L143 1070 305 1212 326 1240H380L395 1230 400 1240 418 1240 455 1260 490 1257 507 1268 555 1272 565 1285 570 1270 605 1220 620 1180 770 1092 783 1100 800 1125 840 1165H880L900 1158 915 1162 935 1155 955 1165 990 1118 1053 1112 1120 1095 1145 1060 1155 1030 1172 1015 1218 982 1283 957 1340 944 1410 949H1485L1555 820 1568 798M955 1165L865 1340 808 1410V1538"/>
        <path class="water" d="M-10 1010L0 1040 5 1130 0 1155 10 1200 2 1240 5 1300 28 1345 35 1370 60 1393 80 1395 85 1430 82 1485 70 1503 58 1500 52 1475 38 1440V1420L0 1380H-10zM300 583L328 590 318 628 302 640 278 700 270 705 252 715 255 692 268 675 278 680 290 655 280 635 285 598zM250 727L258 735 252 765 228 778V765L240 735zM133 962V995L120 1028 100 1030 92 1047 86 1040 102 975 115 985zM495 173L485 207 471 203 475 190z"/>
        <path class="river" d="M162 107L160 125 210 205 235 235 237 300 225 350 205 405 198 435 222 455 213 490 208 520 190 533 172 568 138 578 128 565 90 562 45 595 0 625M433 585L425 600 435 625 470 685 490 705 537 722 555 762 568 777 583 780 590 815 612 823 645 850 670 857 720 848 798 785 825 785 833 795 875 910 905 970 910 1000 940 1045 983 1088 992 1113 1020 1123 1045 1145 1065 1172 1070 1200 1063 1250 1068 1280 1060 1310 1065 1340 1077 1360 1040 1420 1038 1450 1030 1480V1505L1018 1520 1003 1515 1010 1535"/>
      </g>
      <!-- south-east tile -->
      <g transform="translate(2500 980) scale(.5230 .3954)">
        <path class="thin" d="M705 -4V27L612 154M533 252L520 272M457 375L613 404 700 342 725 343 773 371 800 408M105 822L152 911 207 928 235 920 233 945 217 992 224 1058 263 1102V1178L372 1270"/>
        <path class="thick" d="M0 115L363 278H525L457 375 415 420 285 602 175 725 103 818 35 947H0"/>
        <path class="water" d="M970 -6L964 15V40L930 83 922 120 910 140 907 170 898 182 905 200 910 240 880 235 845 270 828 293 825 315 829 328 818 350 815 370 795 420 753 492 733 540 708 622 707 665 700 685 645 800 636 828 615 862 600 893 560 957 540 1018 512 1068 460 1140 372 1270 335 1325 305 1362 256 1420 247 1438 235 1447 205 1494 150 1538H1530V-6z"/>
      </g>
      <g class="country">
        <text x="1096" y="528.500" textLength="172" lengthAdjust="spacingAndGlyphs" font-size="44">SUDAN</text>
        <text x="1810" y="404" textLength="212" lengthAdjust="spacingAndGlyphs" font-size="41">ERITREA</text>
        <text x="2226" y="772" textLength="211" lengthAdjust="spacingAndGlyphs" font-size="41">DJIBOUTI</text>
        <text x="1844" y="916" textLength="255" lengthAdjust="spacingAndGlyphs" font-size="46">ETHIOPIA</text>
        <text x="1112" y="1095" textLength="170" lengthAdjust="spacingAndGlyphs" font-size="44">SOUTH</text>
        <text x="1110" y="1142.500" textLength="174" lengthAdjust="spacingAndGlyphs" font-size="44">SUDAN</text>
        <text x="2765" y="1074" textLength="209" lengthAdjust="spacingAndGlyphs" font-size="41">SOMALIA</text>
      </g>
      <g class="city">
        <text x="1239" y="437.500" textLength="194" lengthAdjust="spacingAndGlyphs" font-size="38">Khartoum</text><rect x="1438.500" y="418" width="12" height="12"/>
        <text x="1621" y="447.500" textLength="144" lengthAdjust="spacingAndGlyphs" font-size="38">Kassala</text><rect x="1770" y="428.500" width="12" height="12"/>
        <text x="1839" y="456" textLength="144" lengthAdjust="spacingAndGlyphs" font-size="38">Asmara</text><rect x="1989.500" y="438" width="12" height="12"/>
        <text x="2313" y="457" textLength="124" lengthAdjust="spacingAndGlyphs" font-size="38">Sana'a</text><rect x="2443.500" y="437.500" width="12" height="12"/>
        <text x="2394" y="685" textLength="115" lengthAdjust="spacingAndGlyphs" font-size="38">`Adan</text><rect x="2514" y="664.500" width="12" height="12"/>
        <text x="2259" y="968" textLength="165" lengthAdjust="spacingAndGlyphs" font-size="38">Hargeisa</text><rect x="2431" y="948" width="12" height="12"/>
        <text x="1672" y="1018" textLength="298" lengthAdjust="spacingAndGlyphs" font-size="42">ADDIS ABABA</text><rect x="1974" y="995.500" width="12" height="12"/>
        <text x="960" y="1128" textLength="81" lengthAdjust="spacingAndGlyphs" font-size="38">Wau</text><rect x="1047" y="1110" width="12" height="12"/>
      </g>
    </svg>
  </main>
</div>
<svg class="annotations" viewBox="0 0 3456 1922">
  <g fill="none" stroke="#f00" stroke-width="10">
    <rect x="12" y="764" width="376" height="76"/>
    <rect x="412" y="396" width="340" height="84"/>
    <rect x="2920" y="52" width="404" height="140"/>
  </g>
  <g fill="#f00">
    <path d="M425 804L481 776V799H568V809H481V832zM765 452L821 424V447H905V457H821V480zM2688 111H2811V88L2867 116 2811 144V121H2688z"/>
    <circle cx="592" cy="804" r="22"/><circle cx="932" cy="456" r="22"/><circle cx="2648" cy="112" r="22"/>
  </g>
  <g class="badge"><text x="592" y="811">1</text><text x="932" y="463">2</text><text x="2648" y="119">3</text></g>
</svg>
</body>
</html>
```
FILE: styles.css
```css
* { box-sizing: border-box; }
body { margin: 0; font-family: Inter, "Liberation Sans", sans-serif; background: #fff; overflow: hidden; }
.defs { display: none; }
.layout { display: flex; height: 1922px; }

.sidebar { width: 400px; flex: none; background: #2e1f5e; display: flex; flex-direction: column; color: #d5d2df; }
.sidebar-top { display: flex; justify-content: flex-end; padding: 38px 52px 0 0; height: 102px; }
.collapse { width: 28px; height: 24px; }
.logo { width: 220px; height: 220px; margin: 0 auto; flex: none; }
.menu { margin-top: 85px; display: flex; flex-direction: column; }
.item { height: 87px; display: flex; align-items: center; padding: 0 46px 0 48px; font-size: 28px; white-space: nowrap; letter-spacing: -0.35px; }
.item span { margin-left: 30px; flex: 1; }
.search span { margin-left: 34px; padding-top: 5px; letter-spacing: -0.1px; }
.icon { width: 28px; height: 28px; flex: none; fill: currentColor; }
.icon.folder { height: 21px; }
.icon.gears { width: 32px; height: 30px; margin: 0 -2px; }
.icon.help { width: 32px; height: 32px; margin: 0 -2px; }
.chev { width: 12px; height: 20px; flex: none; }
.chev.back { transform: scaleX(-1); margin-right: -2px; }
.item.active { background: #261a4e; color: #fff; text-shadow: -1px -1px 0 rgba(0,0,0,.35); letter-spacing: -0.65px; }
.account { margin-top: auto; height: 104px; display: flex; align-items: center; padding: 0 47px 0 40px; color: #fff; }
.avatar { width: 56px; height: 56px; }
.account-name { font-size: 29px; margin-left: 16px; flex: 1; letter-spacing: -0.4px; }
.chev-up { width: 18px; height: 12px; }

.submenu { width: 400px; flex: none; background: #261a4e; box-shadow: 2px 0 4px rgba(0,0,0,.55); display: flex; flex-direction: column; color: #d4d1dc; position: relative; }
.submenu-icon { width: 110px; height: 83px; margin: 131px auto 0 144px; fill: #483b66; flex: none; }
.submenu h2 { margin: 52px 0 0; text-align: center; font-size: 36px; line-height: 44px; font-weight: 600; color: #fff; letter-spacing: -0.4px; white-space: nowrap; text-shadow: -1px -1px 0 rgba(0,0,0,.35); }
.subitem { display: flex; padding: 0 0 0 48px; font-size: 28px; line-height: 37px; text-shadow: -1px -1px 0 rgba(0,0,0,.35); letter-spacing: -0.45px; }
.subitem.active { margin-top: 106px; margin-bottom: 51px; color: #fff; }
.subitem span { margin-left: 30px; }
.subicon { width: 28px; height: 27px; margin-top: 4px; fill: currentColor; }
.subicon.gear { height: 28px; }

.main { flex: 1; padding: 80px 160px 0; border-bottom: 2px solid #929090; }
.header { display: flex; justify-content: space-between; height: 84px; align-items: flex-start; }
h1 { margin: 3px 0 0; font-size: 60px; line-height: 72px; font-weight: 800; color: #2e1f5e; letter-spacing: -0.6px; white-space: nowrap; }
.add { width: 324px; height: 84px; border: 2px solid #007d7e; border-radius: 6px; background: #007d7e; padding: 0; display: flex; align-items: center; font-family: inherit; font-size: 28px; color: #fff; overflow: hidden; }
.add-icon { width: 84px; height: 80px; background: #076164; display: flex; align-items: center; justify-content: center; }
.add-icon svg { width: 32px; height: 32px; }
.add-label { margin-left: 14px; white-space: nowrap; letter-spacing: -0.5px; }
.select { margin-top: 100px; width: 333px; height: 84px; border: 2px solid #c8c8c8; border-radius: 10px; display: flex; align-items: center; justify-content: space-between; padding: 0 32px 0 40px; font-size: 36px; color: #262626; white-space: nowrap; letter-spacing: -1.05px; }
.select svg { width: 26px; height: 16px; }
.map { display: block; margin-top: 40px; width: 2336px; height: 1200px; }
.map path { vector-effect: non-scaling-stroke; stroke-linejoin: round; }
.water { fill: #d4dadc; }
.land { fill: #fafaf8; }
.thin { fill: none; stroke: #f0dfe1; stroke-width: 2.7px; }
.thick { fill: none; stroke: #ebd6d8; stroke-width: 5px; }
.dash { stroke-dasharray: 12 11; }
.river { fill: none; stroke: #d8e1e5; stroke-width: 2.4px; }
.country, .city { font-family: Inter, sans-serif; font-weight: 600; stroke: #fafaf8; stroke-width: 7px; paint-order: stroke; stroke-linejoin: round; }
.country { fill: #abb8c1; }
.city { fill: #8f9fae; }
.city rect { stroke-width: 3px; }

.annotations { position: absolute; left: 0; top: 0; width: 3456px; height: 1922px; pointer-events: none; }
.badge { font-family: Roboto, sans-serif; font-size: 25px; fill: #fff; text-anchor: middle; }
```
